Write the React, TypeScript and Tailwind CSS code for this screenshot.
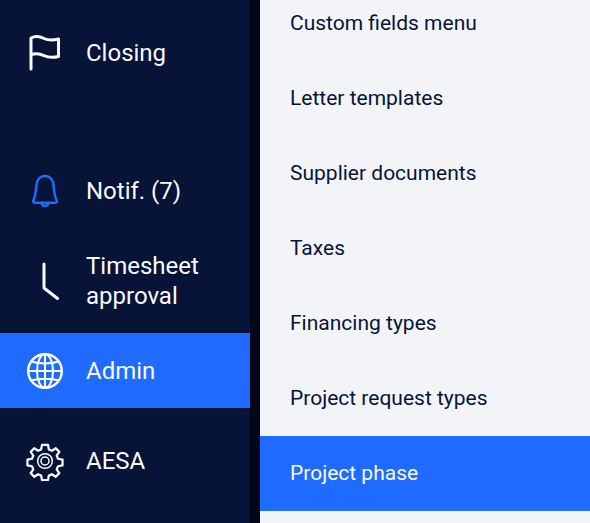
import React from "react";

const Flag = () => (
  <svg width="32" height="36" viewBox="0 0 32 36" fill="none" stroke="#f8fafc" strokeWidth="3" strokeLinecap="round" strokeLinejoin="round">
    <path d="M2 34V3c5-2.500 9-1.500 13 .5 4 1.800 8 2 14.500.500V21.500c-6.500 1.600-10.500 1-14.500-.8-4-1.900-8.500-2.700-13-.7" />
  </svg>
);
const Bell = () => (
  <svg width="28" height="34" viewBox="0 0 28 34" fill="none" stroke="#1f6bff" strokeWidth="2.500" strokeLinecap="round" strokeLinejoin="round">
    <path d="M14 2c-5 0-8 4-8.500 9C5 17 4.500 22 2.500 26c-.8 2 0 2.700 1.500 2.700h20c1.500 0 2.300-.7 1.500-2.700-2-4-2.500-9-3-15C22 6 19 2 14 2Z" />
    <path d="M10.500 29c.5 2 1.800 3 3.500 3s3-1 3.500-3" />
  </svg>
);
const ClockHands = () => (
  <svg className="ml-[12px]" width="18" height="38" viewBox="0 0 18 38" fill="none" stroke="#f8fafc" strokeWidth="3" strokeLinecap="round" strokeLinejoin="round">
    <path d="M2 2v24l13.500 10.500" />
  </svg>
);
const Globe = () => (
  <svg width="38" height="38" viewBox="0 0 38 38" fill="none" stroke="#ffffff" strokeWidth="2">
    <circle cx="19" cy="19" r="16.800" strokeWidth="2.400" />
    <ellipse cx="19" cy="19" rx="8" ry="16.800" />
    <path d="M19 2v34M2.200 19h33.600M5 9.500c8 2.500 20 2.500 28 0M5 28.500c8-2.500 20-2.500 28 0" />
  </svg>
);
const Gear = () => (
  <svg width="40" height="40" viewBox="0 0 24 24" fill="none" stroke="#f8fafc" strokeWidth="1.500" strokeLinecap="round" strokeLinejoin="round">
    <path d="M10 1.300h4l.6 3 2 .9 2.600-1.700 2.300 2.400-1.700 2.500.9 2.100 3 .6v3.800l-3 .6-.9 2.100 1.700 2.500-2.300 2.400-2.600-1.700-2 .9-.6 3h-4l-.6-3-2-.9-2.600 1.700-2.300-2.400 1.700-2.500-.9-2.100-3-.6v-3.800l3-.6.900-2.100-1.700-2.500 2.300-2.400 2.600 1.700 2-.9.600-3Z" transform="translate(1.200 1.200) scale(.9)" />
    <circle cx="12" cy="12" r="4.400" strokeWidth=".9" />
    <circle cx="12" cy="12" r="2.400" strokeWidth=".9" />
  </svg>
);

const SideItem = ({ icon, label, className }: { icon: React.ReactNode; label: React.ReactNode; className: string }) => (
  <div className={`flex items-center ${className}`}>
    <div className="flex w-[86px] shrink-0 items-center justify-center pl-[4px]">{icon}</div>
    <span className="text-[24px] leading-[30px] text-[#f8fafc]">{label}</span>
  </div>
);

const items = ["Custom fields menu", "Letter templates", "Supplier documents", "Taxes", "Financing types", "Project request types"];

export default function App() {
  return (
    <div className="flex h-[523px] w-[590px] overflow-hidden bg-[#f2f4f8] font-['Roboto',sans-serif]">
      <div className="flex h-full w-[250px] shrink-0 flex-col bg-[#071438] pt-[15px]">
        <SideItem className="h-[75px]" icon={<Flag />} label="Closing" />
        <div className="h-[63px]" />
        <SideItem className="h-[75px]" icon={<Bell />} label="Notif. (7)" />
        <SideItem className="h-[105px]" icon={<ClockHands />} label={<>Timesheet<br />approval</>} />
        <SideItem className="h-[75px] bg-[#1f6bff]" icon={<Globe />} label="Admin" />
        <SideItem className="h-[106px]" icon={<Gear />} label="AESA" />
      </div>
      <div className="h-full w-[10px] shrink-0 bg-[#020819]" />
      <div className="-mt-[14px] flex min-w-0 flex-1 flex-col">
        {items.map((t) => (
          <div key={t} className="flex h-[75px] shrink-0 items-center pl-[30px] text-[21px] text-[#071438]">{t}</div>
        ))}
        <div className="flex h-[75px] shrink-0 items-center bg-[#1f6bff] pl-[30px] text-[21px] text-[#f8fafc]">Project phase</div>
      </div>
    </div>
  );
}
